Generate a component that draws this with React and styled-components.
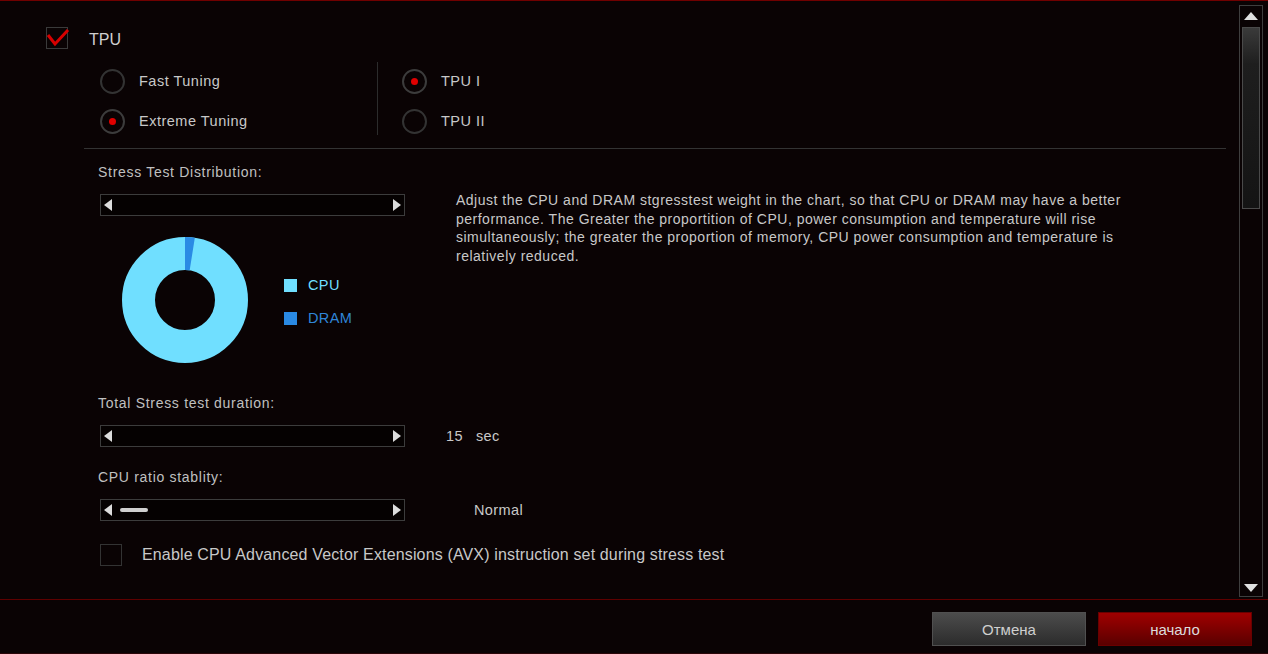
import React from "react";
import styled, { createGlobalStyle } from "styled-components";

const GlobalStyle = createGlobalStyle`
  html, body {
    margin: 0;
    padding: 0;
    background: #0a0304;
  }
  body {
    font-family: "Liberation Sans", Arial, sans-serif;
  }
`;

const Window = styled.div`
  width: 1268px;
  height: 654px;
  background: #0a0304;
  display: flex;
  flex-direction: column;
  border-top: 1px solid #700000;
  border-bottom: 1px solid #2a0608;
  box-sizing: border-box;
  overflow: hidden;
`;

const Main = styled.div`
  flex: 1;
  display: flex;
  padding: 4px 5px 2px 0;
  min-height: 0;
`;

const Content = styled.div`
  flex: 1;
  padding: 22px 0 0 46px;
  display: flex;
  flex-direction: column;
`;

const HeaderRow = styled.div`
  display: flex;
  align-items: center;
  gap: 21px;
  height: 22px;
`;

const CheckBox = styled.div`
  width: 20px;
  height: 20px;
  border: 1px solid #3a3a3a;
  position: relative;
  flex-shrink: 0;
`;

const CheckMark = styled.svg`
  position: absolute;
  left: 0;
  top: -4px;
  overflow: visible;
`;

const Title = styled.span`
  color: #cfcfcf;
  font-size: 16px;
  margin-top: 3px;
`;

const Options = styled.div`
  display: flex;
  margin: 13px 0 0 54px;
  padding: 6px 0;
`;

const OptionCol = styled.div`
  display: flex;
  flex-direction: column;
  gap: 14px;
  width: ${(p) => p.$width || "auto"};
  padding-left: ${(p) => p.$pad || "0"};
`;

const VDivider = styled.div`
  width: 1px;
  background: #2c2c2c;
  margin: -6px 0 -1px;
`;

const RadioRow = styled.label`
  display: flex;
  align-items: center;
  gap: 14px;
  height: 26px;
  color: #c8c8c8;
  font-size: 14.5px;
  letter-spacing: 0.5px;
`;

const Radio = styled.span`
  width: 21px;
  height: 21px;
  border: 2px solid ${(p) => (p.$on ? "#3c3c3c" : "#333")};
  border-radius: 50%;
  display: flex;
  align-items: center;
  justify-content: center;
  flex-shrink: 0;
  &::after {
    content: "";
    width: 7px;
    height: 7px;
    border-radius: 50%;
    background: ${(p) => (p.$on ? "#e00000" : "transparent")};
  }
`;

const HRule = styled.div`
  height: 1px;
  background: #333;
  margin: 8px 13px 0 38px;
`;

const Body = styled.div`
  margin-left: 52px;
  display: flex;
  flex-direction: column;
`;

const Label = styled.div`
  color: #c0c0c0;
  font-size: 14px;
  line-height: 16px;
  letter-spacing: 0.7px;
  margin-top: ${(p) => p.$mt || "0"};
`;

const DistRow = styled.div`
  display: flex;
  margin-top: 14px;
`;

const LeftCol = styled.div`
  width: 356px;
  padding-left: 2px;
  display: flex;
  flex-direction: column;
`;

const Description = styled.p`
  margin: -3px 0 0 0;
  width: 700px;
  color: #c8c8c8;
  font-size: 14px;
  line-height: 18.5px;
  letter-spacing: 0.5px;
`;

const SliderRow = styled.div`
  display: flex;
  align-items: center;
  margin-top: ${(p) => p.$mt || "0"};
  padding-left: 2px;
  color: #c8c8c8;
  font-size: 14.5px;
  letter-spacing: 0.4px;
`;

const Track = styled.div`
  width: 297px;
  height: 20px;
  border: 1px solid #3c3c3c;
  background: #050101;
  display: flex;
  align-items: center;
  justify-content: space-between;
  padding: 0 3px;
  box-sizing: content-box;
  position: relative;
  flex-shrink: 0;
`;

const Arrow = styled.span`
  width: 0;
  height: 0;
  border-top: 6px solid transparent;
  border-bottom: 6px solid transparent;
  ${(p) =>
    p.$dir === "left"
      ? "border-right: 8px solid #dcdcdc;"
      : "border-left: 8px solid #dcdcdc;"}
`;

const Thumb = styled.span`
  position: absolute;
  left: 19px;
  top: 8px;
  width: 28px;
  height: 4px;
  border-radius: 2px;
  background: #cfcfcf;
`;

const Value = styled.span`
  margin-left: ${(p) => p.$ml || "0"};
`;

const ChartRow = styled.div`
  display: flex;
  align-items: center;
  margin-top: 20px;
  margin-left: 21px;
`;

const Legend = styled.div`
  display: flex;
  flex-direction: column;
  gap: 17px;
  margin-left: 35px;
  margin-top: 3px;
`;

const LegendItem = styled.div`
  display: flex;
  align-items: center;
  gap: 11px;
  color: ${(p) => p.$text};
  font-size: 14.5px;
  letter-spacing: 0.4px;
  &::before {
    content: "";
    width: 13px;
    height: 13px;
    background: ${(p) => p.$color};
  }
`;

const AvxRow = styled.div`
  display: flex;
  align-items: center;
  gap: 20px;
  margin-top: 23px;
  padding-left: 2px;
  color: #c8c8c8;
  font-size: 16px;
  letter-spacing: 0.15px;
`;

const EmptyBox = styled.span`
  width: 20px;
  height: 20px;
  border: 1px solid #333;
`;

const ScrollBar = styled.div`
  width: 24px;
  border: 1px solid #3e3e3e;
  display: flex;
  flex-direction: column;
  align-items: center;
  padding: 6px 0 4px;
  box-sizing: border-box;
`;

const ScrollArrow = styled.span`
  width: 0;
  height: 0;
  border-left: 7px solid transparent;
  border-right: 7px solid transparent;
  ${(p) =>
    p.$dir === "up"
      ? "border-bottom: 8px solid #e0e0e0;"
      : "border-top: 8px solid #e0e0e0;"}
`;

const ScrollThumb = styled.div`
  width: 18px;
  height: 182px;
  margin-top: 7px;
  border: 1px solid #4a4a4a;
  background: linear-gradient(#3a3a3a, #1e1e1e 20%, #141414);
  box-sizing: border-box;
`;

const Spacer = styled.div`
  flex: 1;
`;

const Footer = styled.div`
  height: 54px;
  border-top: 1px solid #5e0000;
  display: flex;
  justify-content: flex-end;
  align-items: flex-start;
  gap: 12px;
  padding: 12px 16px 0 0;
  box-sizing: border-box;
`;

const Button = styled.button`
  width: 154px;
  height: 34px;
  border: 1px solid ${(p) => (p.$primary ? "#6a0000" : "#505050")};
  background: ${(p) =>
    p.$primary
      ? "linear-gradient(#a00000, #5a0000)"
      : "linear-gradient(#4c4c4c, #2c2c2c)"};
  color: ${(p) => (p.$primary ? "#dcdcdc" : "#cfcfcf")};
  font-family: "Liberation Sans", Arial, sans-serif;
  font-size: 15px;
  cursor: pointer;
`;

const Donut = () => {
  const r = 46.5;
  const c = 2 * Math.PI * r;
  const dram = c * 0.025;
  return (
    <svg width="128" height="128" viewBox="0 0 128 128">
      <g transform="rotate(-90 64 64)">
        <circle cx="64" cy="64" r={r} fill="none" stroke="#70dfff" strokeWidth="33" />
        <circle
          cx="64"
          cy="64"
          r={r}
          fill="none"
          stroke="#2a8ae4"
          strokeWidth="33"
          strokeDasharray={`${dram} ${c}`}
        />
      </g>
    </svg>
  );
};

const Slider = ({ thumb }) => (
  <Track>
    <Arrow $dir="left" />
    {thumb && <Thumb />}
    <Arrow $dir="right" />
  </Track>
);

export default function App() {
  return (
    <>
      <GlobalStyle />
      <Window>
        <Main>
          <Content>
            <HeaderRow>
              <CheckBox>
                <CheckMark width="22" height="22" viewBox="0 0 22 22">
                  <polyline
                    points="1,11 8,20 21,6"
                    fill="none"
                    stroke="#d80000"
                    strokeWidth="3"
                  />
                </CheckMark>
              </CheckBox>
              <Title>TPU</Title>
            </HeaderRow>

            <Options>
              <OptionCol $width="277px">
                <RadioRow>
                  <Radio />
                  Fast Tuning
                </RadioRow>
                <RadioRow>
                  <Radio $on />
                  Extreme Tuning
                </RadioRow>
              </OptionCol>
              <VDivider />
              <OptionCol $pad="24px">
                <RadioRow>
                  <Radio $on />
                  TPU I
                </RadioRow>
                <RadioRow>
                  <Radio />
                  TPU II
                </RadioRow>
              </OptionCol>
            </Options>

            <HRule />

            <Body>
              <Label $mt="15px">Stress Test Distribution:</Label>
              <DistRow>
                <LeftCol>
                  <Slider />
                  <ChartRow>
                    <Donut />
                    <Legend>
                      <LegendItem $color="#70dfff" $text="#70dfff">CPU</LegendItem>
                      <LegendItem $color="#2a8ae4" $text="#2f86d8">DRAM</LegendItem>
                    </Legend>
                  </ChartRow>
                </LeftCol>
                <Description>
                  Adjust the CPU and DRAM stgresstest weight in the chart, so that CPU or
                  DRAM may have a better performance. The Greater the proportition of CPU,
                  power consumption and temperature will rise simultaneously; the greater
                  the proportion of memory, CPU power consumption and temperature is
                  relatively reduced.
                </Description>
              </DistRow>

              <Label $mt="31px">Total Stress test duration:</Label>
              <SliderRow $mt="14px">
                <Slider />
                <Value $ml="41px">15</Value>
                <Value $ml="13px">sec</Value>
              </SliderRow>

              <Label $mt="22px">CPU ratio stablity:</Label>
              <SliderRow $mt="14px">
                <Slider thumb />
                <Value $ml="69px">Normal</Value>
              </SliderRow>

              <AvxRow>
                <EmptyBox />
                Enable CPU Advanced Vector Extensions (AVX) instruction set during stress test
              </AvxRow>
            </Body>
          </Content>

          <ScrollBar>
            <ScrollArrow $dir="up" />
            <ScrollThumb />
            <Spacer />
            <ScrollArrow $dir="down" />
          </ScrollBar>
        </Main>

        <Footer>
          <Button>Отмена</Button>
          <Button $primary>начало</Button>
        </Footer>
      </Window>
    </>
  );
}
